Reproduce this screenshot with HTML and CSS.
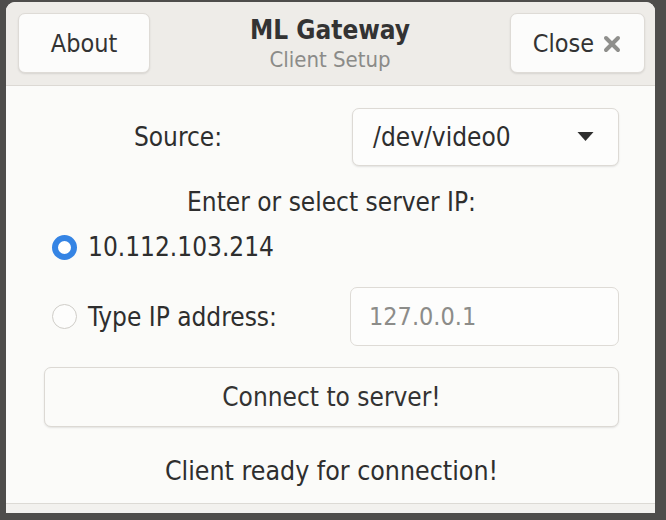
FILE: index.html
```html
<!DOCTYPE html>
<html>
<head>
<meta charset="utf-8">
<link rel="stylesheet" href="styles.css">
</head>
<body>
<div class="window">
  <header class="headerbar">
    <button class="hbtn about">About</button>
    <div class="titles">
      <div class="title">ML Gateway</div>
      <div class="subtitle">Client Setup</div>
    </div>
    <button class="hbtn close">Close
      <svg class="xicon" width="20" height="20" viewBox="0 0 20 20"><path d="M4 4 L16 16 M16 4 L4 16" stroke="#8f8f8c" stroke-width="4" stroke-linecap="round"/></svg>
    </button>
  </header>
  <main class="content">
    <div class="row source-row">
      <div class="label">Source:</div>
      <div class="combo"><span>/dev/video0</span><svg width="17" height="10" viewBox="0 0 16 10"><path d="M0 0 H16 L8 9 Z" fill="#2e2e2e"/></svg></div>
    </div>
    <div class="prompt">Enter or select server IP:</div>
    <div class="radio-row first">
      <span class="radio checked"></span><span class="rtext">10.112.103.214</span>
    </div>
    <div class="row entry-row">
      <div class="radio-row"><span class="radio"></span><span class="rtext">Type IP address:</span></div>
      <div class="entry">127.0.0.1</div>
    </div>
    <button class="connect">Connect to server!</button>
    <div class="status">Client ready for connection!</div>
  </main>
  <div class="bottomedge"></div>
</div>
</body>
</html>
```

FILE: styles.css
```css
html, body {
  margin: 0;
  padding: 0;
}
body {
  background: #4e4d4b;
  width: 666px;
  height: 520px;
  overflow: hidden;
  font-family: "DejaVu Sans Condensed", "DejaVu Sans", sans-serif;
  color: #2e2e2e;
}
.window {
  margin: 2px 0 0 6px;
  width: 649px;
  height: 511px;
  background: #fbfbf9;
  border-radius: 9px 9px 0 0;
  display: flex;
  flex-direction: column;
  overflow: hidden;
}
.headerbar {
  flex: none;
  background: #eeece8;
  border-bottom: 1px solid #dcd9d4;
  display: flex;
  align-items: flex-start;
  padding: 11px 10px 0 12px;
  box-sizing: border-box;
  height: 84px;
}
.hbtn {
  font-family: "DejaVu Sans Condensed", "DejaVu Sans", sans-serif;
  font-size: 25px;
  color: #333;
  background: #fcfcfb;
  border: 1px solid #dedbd6;
  border-radius: 7px;
  box-shadow: 0 1px 2px rgba(0,0,0,0.10);
  height: 60px;
  padding: 0;
  display: flex;
  align-items: center;
  justify-content: center;
}
.about {
  width: 132px;
}
.close {
  width: 135px;
  gap: 8px;
}
.xicon {
  margin-top: 1px;
}
.titles {
  flex: 1;
  text-align: center;
  padding-top: 2px;
}
.title {
  font-weight: bold;
  font-size: 26px;
  color: #333;
  line-height: 30px;
}
.subtitle {
  font-size: 22px;
  color: #8b8b88;
  line-height: 26px;
  margin-top: 2px;
}
.content {
  flex: 1;
  padding: 22px 36px 0 38px;
  display: flex;
  flex-direction: column;
}
.row {
  display: grid;
  grid-template-columns: 268px 267px;
  justify-content: space-between;
  align-items: center;
}
.label {
  text-align: center;
  font-size: 26px;
}
.combo {
  height: 58px;
  box-sizing: border-box;
  background: #fdfdfc;
  border: 1px solid #dddad5;
  border-radius: 7px;
  box-shadow: 0 1px 2px rgba(0,0,0,0.10);
  display: flex;
  align-items: center;
  justify-content: space-between;
  padding: 0 24px 0 20px;
  font-size: 26px;
}
.prompt {
  text-align: center;
  font-size: 26px;
  margin-top: 20px;
  line-height: 32px;
}
.radio-row {
  display: flex;
  align-items: center;
  gap: 11px;
  padding-left: 8px;
  font-size: 26px;
}
.radio-row.first {
  margin-top: 12px;
  height: 34px;
}
.radio {
  width: 25px;
  height: 25px;
  flex: none;
  box-sizing: border-box;
  border-radius: 50%;
  border: 1px solid #cfcdc8;
  background: #fdfdfc;
}
.radio.checked {
  border: 6px solid #3584e4;
  background: #ffffff;
}
.entry-row {
  margin-top: 23px;
  grid-template-columns: 300px 269px;
}
.entry {
  height: 59px;
  box-sizing: border-box;
  border: 1px solid #dedbd6;
  border-radius: 7px;
  background: #fdfdfc;
  display: flex;
  align-items: center;
  padding-left: 18px;
  font-size: 25px;
  color: #8c8c89;
}
.connect {
  margin-top: 21px;
  height: 60px;
  width: 100%;
  font-family: "DejaVu Sans Condensed", "DejaVu Sans", sans-serif;
  font-size: 26px;
  color: #333;
  background: #fbfbf9;
  border: 1px solid #dcd9d4;
  border-radius: 7px;
  box-shadow: 0 1px 2px rgba(0,0,0,0.10);
}
.status {
  text-align: center;
  font-size: 26.5px;
  margin-top: 28px;
  line-height: 32px;
}
.bottomedge {
  height: 9px;
  flex: none;
  background: #f2f1ee;
  border-top: 1px solid #dcdad5;
}
```
